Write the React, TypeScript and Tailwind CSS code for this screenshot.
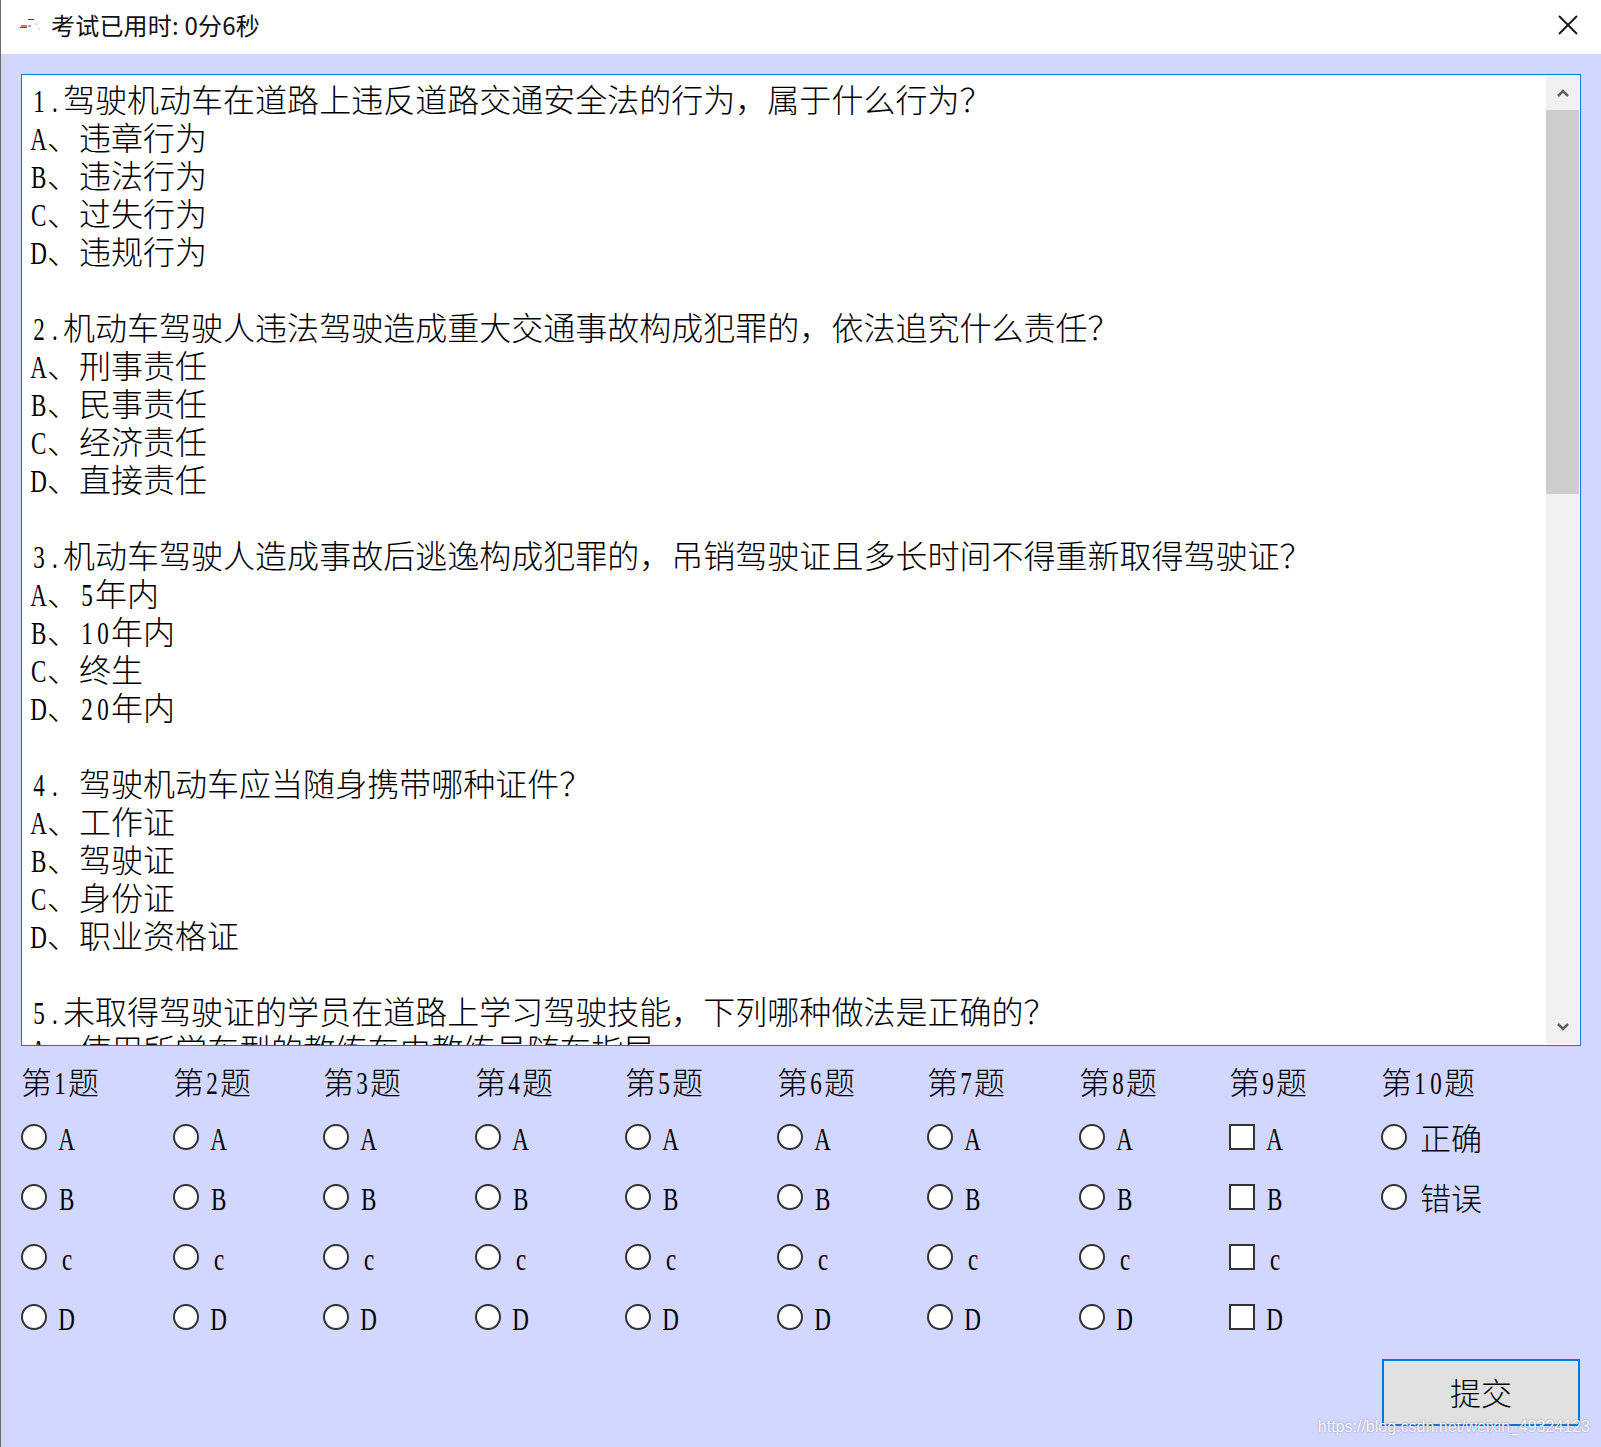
const questions = [
  "1.驾驶机动车在道路上违反道路交通安全法的行为，属于什么行为？",
  "A、违章行为",
  "B、违法行为",
  "C、过失行为",
  "D、违规行为",
  "",
  "2.机动车驾驶人违法驾驶造成重大交通事故构成犯罪的，依法追究什么责任？",
  "A、刑事责任",
  "B、民事责任",
  "C、经济责任",
  "D、直接责任",
  "",
  "3.机动车驾驶人造成事故后逃逸构成犯罪的，吊销驾驶证且多长时间不得重新取得驾驶证？",
  "A、5年内",
  "B、10年内",
  "C、终生",
  "D、20年内",
  "",
  "4. 驾驶机动车应当随身携带哪种证件？",
  "A、工作证",
  "B、驾驶证",
  "C、身份证",
  "D、职业资格证",
  "",
  "5.未取得驾驶证的学员在道路上学习驾驶技能，下列哪种做法是正确的？",
  "A、使用所学车型的教练车由教练员随车指导",
];

const letters = ["A", "B", "c", "D"];

// latin chars get squeezed into half a cjk cell, like SimSun's tall narrow ones
function Mixed({ text }: { text: string }) {
  return (
    <>
      {Array.from(text).map((ch, i) =>
        /[A-Za-z0-9. ]/.test(ch) ? (
          <span key={i} className="inline-flex w-[16px] justify-center">
            <span className="inline-block scale-x-[0.72] font-['Liberation_Serif',serif] font-normal text-[32px] whitespace-pre">
              {ch}
            </span>
          </span>
        ) : (
          <span key={i}>{ch}</span>
        )
      )}
    </>
  );
}

function Radio() {
  return <span className="block w-[26px] h-[26px] rounded-full border-2 border-[#333333] bg-white shrink-0" />;
}

function Check() {
  return <span className="block w-[26px] h-[26px] border-2 border-[#333333] bg-white shrink-0" />;
}

function Column({ num }: { num: number }) {
  const isCheck = num === 9;
  const isJudge = num === 10;
  const opts = isJudge ? ["正确", "错误"] : letters;
  return (
    <div className="flex flex-col">
      <div className="h-[74px] flex items-center text-[31px] leading-none text-black pb-[2px] font-light">
        <div>
          <Mixed text={`第${num}题`} />
        </div>
      </div>
      <div className="flex flex-col gap-[34px] mt-[4px]">
        {opts.map((o) => (
          <div key={o} className="h-[26px] flex items-center text-[31px] text-black font-light">
            {isCheck ? <Check /> : <Radio />}
            <span className={isJudge ? "ml-[13px]" : "ml-[12px] pt-[3px]"}>
              <Mixed text={o} />
            </span>
          </div>
        ))}
      </div>
    </div>
  );
}

export default function App() {
  return (
    <div className="w-[1601px] h-[1447px] relative flex flex-col bg-[#d1d7ff] border-l border-[#6b6b6b] overflow-hidden font-['Noto_Sans_CJK_SC',sans-serif]">
      <div className="h-[54px] shrink-0 bg-white flex items-center pl-[17px] pr-[23px]">
        <svg width="25" height="14" viewBox="0 0 25 14" className="shrink-0 mb-[5px]">
          <rect x="0" y="9" width="6" height="1" fill="#f0c0b8" />
          <rect x="3" y="7" width="6" height="2" fill="#e8743c" />
          <rect x="2" y="9" width="7" height="1" fill="#3a5aa8" />
          <rect x="10" y="1" width="6" height="1" fill="#3a3a80" />
          <rect x="10" y="7" width="3" height="2" fill="#a8a8c8" />
          <rect x="17" y="5" width="3" height="2" fill="#f0d8c8" />
          <rect x="20" y="10" width="2" height="2" fill="#e0e0e8" />
        </svg>
        <span className="ml-[8px] mb-[5px] text-[24px] text-[#111111] leading-none tracking-[0.2px]">考试已用时: 0分6秒</span>
        <svg width="20" height="20" viewBox="0 0 20 20" className="ml-auto mb-[4px]" fill="none" stroke="#1a1a1a" strokeWidth="2">
          <path d="M1 1 L19 19 M19 1 L1 19" />
        </svg>
      </div>

      <div className="flex-1 px-[20px]">
        <div className="mt-[20px] h-[972px] w-[1560px] border border-[#0078d7] bg-white flex overflow-hidden">
          <div className="flex-1 pl-[9px] pt-[4px] text-[32px] leading-[38px] text-black overflow-hidden whitespace-pre font-light">
            {questions.map((line, i) => (
              <div key={i} className="h-[38px]">
                <Mixed text={line} />
              </div>
            ))}
          </div>
          <div className="w-[33px] mt-[1px] mb-[1px] mr-[1px] bg-[#f0f0f0] flex flex-col shrink-0">
            <div className="h-[34px] flex items-center justify-center">
              <svg width="12" height="8" viewBox="0 0 12 8" fill="none" stroke="#606060" strokeWidth="2.5">
                <path d="M1 7 L6 2 L11 7" />
              </svg>
            </div>
            <div className="h-[384px] bg-[#cdcdcd]" />
            <div className="flex-1" />
            <div className="h-[34px] flex items-center justify-center">
              <svg width="12" height="8" viewBox="0 0 12 8" fill="none" stroke="#606060" strokeWidth="2.5">
                <path d="M1 1 L6 6 L11 1" />
              </svg>
            </div>
          </div>
        </div>

        <div className="grid grid-cols-[152px_150px_152px_150px_152px_150px_152px_150px_152px_150px]">
          {[1, 2, 3, 4, 5, 6, 7, 8, 9, 10].map((n) => (
            <Column key={n} num={n} />
          ))}
        </div>
      </div>

      <div className="absolute left-[1381px] top-[1359px] w-[198px] h-[67px] border-2 border-[#0078d7] bg-[#e1e1e1] flex items-center justify-center text-[31px] text-black font-light">
        提交
      </div>
      <div className="absolute right-[11px] top-[1416px] text-[16px] leading-[22px] text-white/90 [text-shadow:0_0_2px_rgba(90,90,90,0.6)] font-['Liberation_Sans',sans-serif]">
        https://blog.csdn.net/weixin_49324123
      </div>
    </div>
  );
}
